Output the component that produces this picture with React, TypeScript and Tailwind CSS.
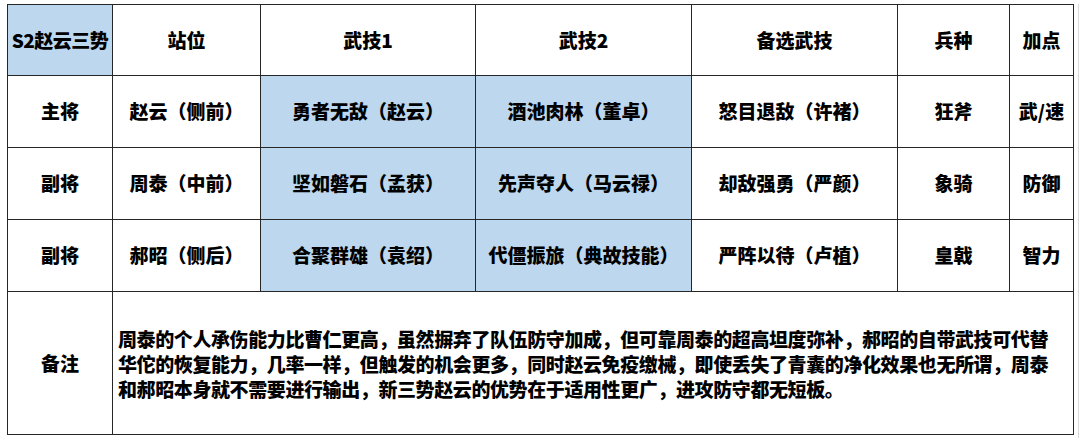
const rows = [
  { role: "主将", pos: "赵云（侧前）", s1: "勇者无敌（赵云）", s2: "酒池肉林（董卓）", alt: "怒目退敌（许褚）", troop: "狂斧", pts: "武/速" },
  { role: "副将", pos: "周泰（中前）", s1: "坚如磐石（孟获）", s2: "先声夺人（马云禄）", alt: "却敌强勇（严颜）", troop: "象骑", pts: "防御" },
  { role: "副将", pos: "郝昭（侧后）", s1: "合聚群雄（袁绍）", s2: "代僵振旅（典故技能）", alt: "严阵以待（卢植）", troop: "皇戟", pts: "智力" },
];

const remark = [
  "周泰的个人承伤能力比曹仁更高，虽然摒弃了队伍防守加成，但可靠周泰的超高坦度弥补，郝昭的自带武技可代替",
  "华佗的恢复能力，几率一样，但触发的机会更多，同时赵云免疫缴械，即使丢失了青囊的净化效果也无所谓，周泰",
  "和郝昭本身就不需要进行输出，新三势赵云的优势在于适用性更广，进攻防守都无短板。",
];

const cell = "border-r border-b border-[#262626] flex items-center justify-center whitespace-nowrap";
const blue = "bg-[#bdd7ee]";

export default function App() {
  return (
    <div
      className="w-[1080px] h-[438px] bg-white pl-[7px] pt-[4px] overflow-hidden text-black font-black text-[19px] flex items-start"
      style={{ fontFamily: '"Noto Sans CJK SC", "Noto Sans", sans-serif' }}
    >
      <div className="grid shrink-0 w-[1067px] grid-cols-[105px_148px_215px_216px_206px_112px_64px] grid-rows-[71px_72px_72px_72px_143px] border-l border-t border-[#262626]">
        <div className={`${cell} ${blue} tracking-[-0.5px]`}>S2赵云三势</div>
        <div className={cell}>站位</div>
        <div className={cell}>武技1</div>
        <div className={cell}>武技2</div>
        <div className={cell}>备选武技</div>
        <div className={cell}>兵种</div>
        <div className={cell}>加点</div>
        {rows.map((r, i) => (
          <div key={i} className="contents">
            <div className={cell}>{r.role}</div>
            <div className={cell}>{r.pos}</div>
            <div className={`${cell} ${blue}`}>{r.s1}</div>
            <div className={`${cell} ${blue}`}>{r.s2}</div>
            <div className={cell}>{r.alt}</div>
            <div className={cell}>{r.troop}</div>
            <div className={cell}>{r.pts}</div>
          </div>
        ))}
        <div className={cell}>备注</div>
        <div className="col-span-6 border-r border-b border-[#262626] flex flex-col justify-center pl-[5px] leading-[25px] tracking-[-0.4px] overflow-hidden">
          {remark.map((line, i) => (
            <div key={i} className="whitespace-nowrap">
              {line}
            </div>
          ))}
        </div>
      </div>
      <div className="ml-[4px] w-px h-[434px] bg-[#d9d9d9]" />
    </div>
  );
}
